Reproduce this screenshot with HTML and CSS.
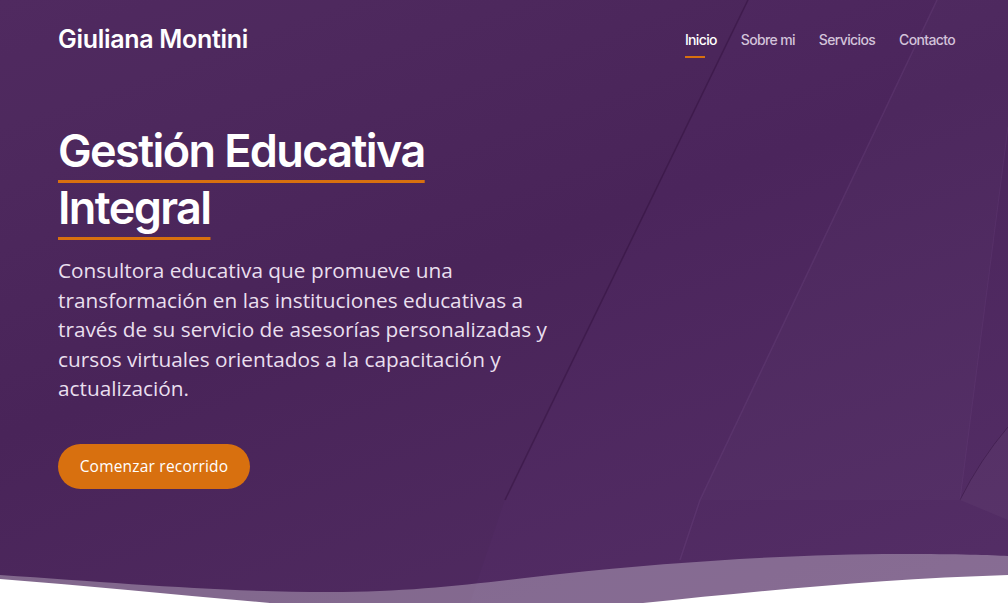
FILE: index.html
```html
<!DOCTYPE html>
<html lang="es">
<head>
<meta charset="utf-8">
<title>Giuliana Montini</title>
<link rel="stylesheet" href="styles.css">
</head>
<body>
<section class="hero">
  <svg class="deco" viewBox="0 0 1008 603" preserveAspectRatio="none" aria-hidden="true">
    <path d="M748 0 L505 500 L470 603 L0 603 L0 0 Z" fill="rgba(0,0,0,0.025)"/>
    <path d="M748 0 L505 500" stroke="rgba(40,10,50,0.35)" stroke-width="1.5" fill="none"/>
    <path d="M937 0 L700 500 L680 560" stroke="rgba(120,80,140,0.25)" stroke-width="1.5" fill="none"/>
    <path d="M937 0 L1008 0 L1008 127 L960 500 L700 500 Z" fill="rgba(255,255,255,0.015)"/>
    <path d="M1008 127 L960 500" stroke="rgba(120,80,140,0.2)" stroke-width="1" fill="none"/>
    <path d="M1008 427 Q980 460 960 500" stroke="rgba(40,10,50,0.35)" stroke-width="1" fill="none"/>
    <path d="M1008 427 Q980 460 960 500 L1008 520 Z" fill="rgba(255,255,255,0.03)"/>
  </svg>

  <header class="topbar">
    <div class="logo">Giuliana Montini</div>
    <nav class="menu">
      <a class="item active" href="#">Inicio</a>
      <a class="item" href="#">Sobre mi</a>
      <a class="item" href="#">Servicios</a>
      <a class="item" href="#">Contacto</a>
    </nav>
  </header>

  <div class="content">
    <h1 class="title"><span class="hl">Gestión Educativa</span><br><span class="hl">Integral</span></h1>
    <p class="lead">Consultora educativa que promueve una transformación en las instituciones educativas a través de su servicio de asesorías personalizadas y cursos virtuales orientados a la capacitación y actualización.</p>
    <a class="cta" href="#">Comenzar recorrido</a>
  </div>

  <svg class="wave" viewBox="0 0 1008 60" preserveAspectRatio="none" aria-hidden="true">
    <path d="M0 32 C120 40 220 49 330 49 C420 49 480 40 560 31 C680 18 800 11 900 11 C960 11 990 12 1008 13 L1008 60 L0 60 Z" fill="rgba(255,255,255,0.3)"/>
    <path d="M0 36 C90 43 180 52 270 60 L0 60 Z M643 60 C760 48 880 36 1008 32 L1008 60 Z" fill="#ffffff"/>
  </svg>
</section>
</body>
</html>
```

FILE: styles.css
```css
* { box-sizing: border-box; }
html, body { margin: 0; padding: 0; }
body { background: #ffffff; font-family: "Open Sans", sans-serif; }

.hero {
  position: relative;
  height: 603px;
  overflow: hidden;
  background: linear-gradient(160deg, #522c63 0%, #4b255c 45%, #542e66 100%);
  display: flex;
  flex-direction: column;
}

.deco {
  position: absolute;
  inset: 0;
  width: 100%;
  height: 100%;
}

.topbar {
  position: relative;
  display: flex;
  justify-content: space-between;
  align-items: center;
  height: 78px;
  padding: 0 53px 0 58px;
}

.logo {
  font-family: "Inter", sans-serif;
  font-weight: 600;
  font-size: 25px;
  color: #ffffff;
  letter-spacing: -0.3px;
}

.menu {
  display: flex;
  gap: 24px;
}

.item {
  position: relative;
  font-family: "Inter", sans-serif;
  font-weight: 500;
  font-size: 14px;
  color: #d3c3da;
  text-decoration: none;
  letter-spacing: -0.65px;
}

.item.active { color: #ffffff; }
.item.active::after {
  content: "";
  position: absolute;
  left: 0;
  top: 25px;
  width: 20px;
  height: 2px;
  background: #d8700f;
}

.content {
  position: relative;
  padding: 44px 0 0 58px;
}

.title {
  margin: 0;
  font-family: "Inter", sans-serif;
  font-weight: 600;
  font-size: 45px;
  line-height: 57px;
  color: #ffffff;
  letter-spacing: -1.6px;
}

.hl {
  text-decoration: underline;
  text-decoration-color: #d8700f;
  text-decoration-thickness: 3px;
  text-underline-offset: 13px;
  text-decoration-skip-ink: none;
}

.lead {
  margin: 20px 0 0;
  width: 500px;
  font-family: "Open Sans", sans-serif;
  font-size: 20.8px;
  line-height: 29.5px;
  color: #e9dfee;
}

.cta {
  display: inline-flex;
  align-items: center;
  justify-content: center;
  margin-top: 40px;
  width: 192px;
  height: 45px;
  border-radius: 23px;
  background: #d8700f;
  color: #ffffff;
  font-family: "Open Sans", sans-serif;
  font-size: 15.5px;
  text-decoration: none;
  letter-spacing: 0.2px;
}

.wave {
  position: absolute;
  left: 0;
  bottom: 0;
  width: 100%;
  height: 60px;
}
```
